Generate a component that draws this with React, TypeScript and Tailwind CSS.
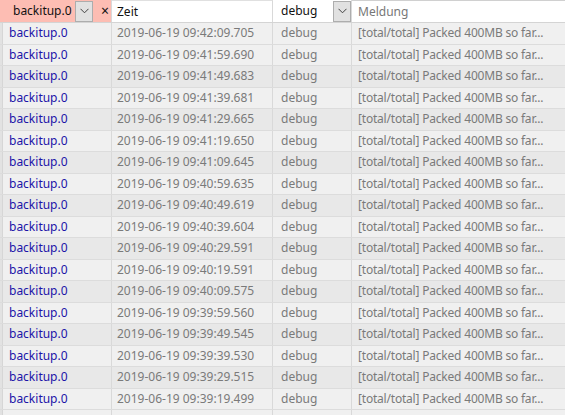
import React from "react";

const times = [
  "2019-06-19 09:42:09.705",
  "2019-06-19 09:41:59.690",
  "2019-06-19 09:41:49.683",
  "2019-06-19 09:41:39.681",
  "2019-06-19 09:41:29.665",
  "2019-06-19 09:41:19.650",
  "2019-06-19 09:41:09.645",
  "2019-06-19 09:40:59.635",
  "2019-06-19 09:40:49.619",
  "2019-06-19 09:40:39.604",
  "2019-06-19 09:40:29.591",
  "2019-06-19 09:40:19.591",
  "2019-06-19 09:40:09.575",
  "2019-06-19 09:39:59.560",
  "2019-06-19 09:39:49.545",
  "2019-06-19 09:39:39.530",
  "2019-06-19 09:39:29.515",
  "2019-06-19 09:39:19.499",
];

function Chevron() {
  return (
    <svg width="9" height="6" viewBox="0 0 9 6" fill="none">
      <path d="M0.5 0.8 L4.5 4.8 L8.5 0.8" stroke="#404040" strokeWidth="1" />
    </svg>
  );
}

function Row({ t, dark }: { t?: string; dark: boolean }) {
  return (
    <div
      className={`flex h-[21.5px] shrink-0 border-b border-[#dcdcdc] ${dark ? "bg-[#e8e8e8]" : "bg-[#f0f0f0]"}`}
    >
      <div className="w-[3px] bg-[#e2e2e2] border-r border-[#d6d6d6]" />
      <div className="flex w-[109px] items-center border-r border-[#d9d9d9] pl-[6px] text-[12px] text-[#1c14a8]">
        {t ? "backitup.0" : ""}
      </div>
      <div className="flex w-[161px] items-center border-r border-[#d9d9d9] pl-[5px] text-[12px] text-[#7a7a7a]">
        {t ?? ""}
      </div>
      <div className="flex w-[79px] items-center border-r border-[#d9d9d9] pl-[8px] text-[12px] text-[#7a7a7a]">
        {t ? "debug" : ""}
      </div>
      <div className="flex flex-1 items-center pl-[6px] text-[12px] tracking-[-0.2px] text-[#7a7a7a] whitespace-nowrap">
        {t ? "[total/total] Packed 400MB so far..." : ""}
      </div>
    </div>
  );
}

export default function App() {
  return (
    <div
      className="w-[565px] h-[415px] overflow-hidden bg-white text-[11px] leading-none"
      style={{ fontFamily: '"Noto Sans", "Segoe UI", sans-serif' }}
    >
      {/* header */}
      <div className="flex h-[23px] border-b border-[#d4d4d4] bg-white">
        <div className="flex w-[112px] items-center bg-[#fdbdb3] border-r border-[#d9d9d9]">
          <span className="ml-[13px] w-[62px] text-[12px] text-[#111]">backitup.0</span>
          <div className="flex h-[21px] w-[18px] items-center justify-center border border-[#adadad] bg-[#e1e1e1]">
            <Chevron />
          </div>
          <span className="ml-[8px] text-[14px] text-[#111]">×</span>
        </div>
        <div className="flex w-[161px] items-center border-t border-[#e0e0e0] border-r border-r-[#d9d9d9] pl-[5px] text-[12px] text-[#111]">
          Zeit
        </div>
        <div className="flex w-[79px] items-center border-r border-[#d9d9d9]">
          <span className="ml-[8px] w-[52px] text-[12px] text-[#111]">debug</span>
          <div className="flex h-[21px] w-[18px] items-center justify-center border border-[#adadad] bg-[#e1e1e1]">
            <Chevron />
          </div>
        </div>
        <div className="flex flex-1 items-center border-t border-[#d0d0d0] pl-[6px] text-[12px] text-[#777]">
          Meldung
        </div>
      </div>
      {/* rows */}
      <div className="flex flex-col">
        {times.map((t, i) => (
          <Row key={i} t={t} dark={i > 0 && i % 2 === 0} />
        ))}
        <Row dark={false} />
      </div>
    </div>
  );
}
